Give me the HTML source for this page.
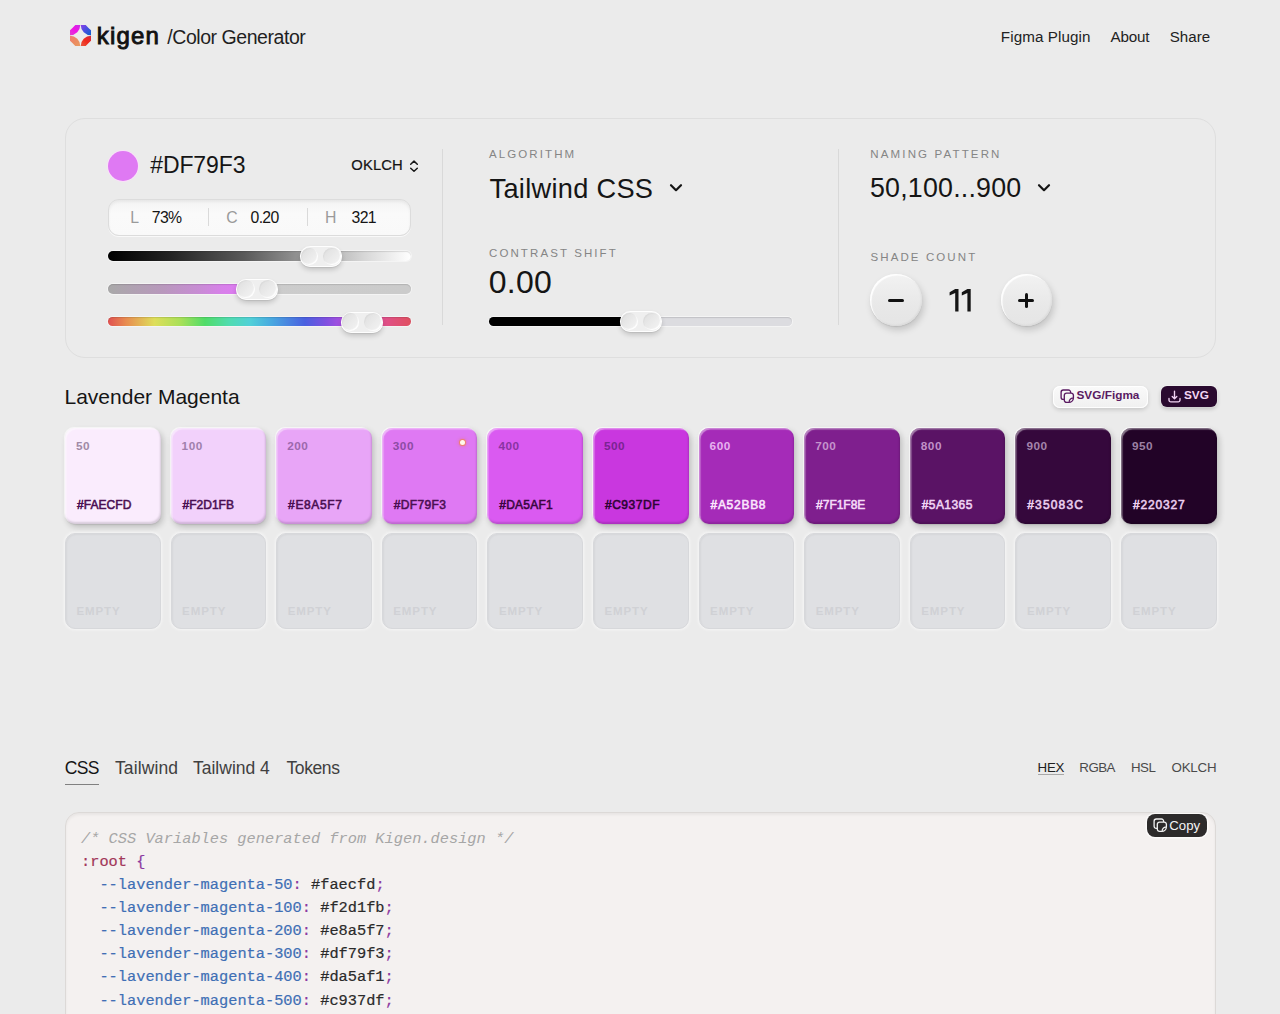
<!DOCTYPE html>
<html><head><meta charset="utf-8"><style>
*{margin:0;padding:0;box-sizing:border-box}
html,body{width:1280px;height:1014px;overflow:hidden;background:#ebebeb;font-family:"Liberation Sans",sans-serif}
.t{position:absolute;white-space:nowrap;line-height:1}
.abs{position:absolute}
.card{position:absolute;left:64.5px;top:117.5px;width:1151.5px;height:240px;border:1px solid #dedede;border-radius:20px;background:#ebebeb;}
.vdiv{position:absolute;width:1px;background:#d9d9d9}
.track{position:absolute;height:9.5px;border-radius:5px;box-shadow:inset 0 1px 1px rgba(0,0,0,.12), 0 0 0 1px rgba(255,255,255,.45)}
.thumb{position:absolute;width:42px;height:21px;border-radius:11px;background:#efefef;box-shadow:0 3px 5px rgba(0,0,0,.16),0 1px 1px rgba(0,0,0,.08),inset 0 0 0 1px rgba(255,255,255,.9)}
.thumb:before,.thumb:after{content:"";position:absolute;top:1.6px;width:17.8px;height:17.8px;border-radius:50%;background:linear-gradient(135deg,#dedede,#ececec 60%,#f4f4f4);box-shadow:inset -1px -1px 1px rgba(255,255,255,.95),inset 1px 1px 1px rgba(0,0,0,.03)}
.thumb:before{left:1.1px}.thumb:after{right:0.9px}
.sw{position:absolute;width:95.5px;height:95.5px;border-radius:10px}
.swf{box-shadow:inset 1.5px 1.5px 1px rgba(255,255,255,.45),inset -1px -2px 2px rgba(0,0,0,.14),-1px -1px 1px rgba(255,255,255,.7),2px 3px 6px rgba(0,0,0,.2),0 1px 1px rgba(0,0,0,.08)}
.swe{background:#dfe0e3;border:1px solid #d7d8db;box-shadow:inset 1px 1px 2px rgba(0,0,0,.04),0 0 3px 1px rgba(255,255,255,.55)}
.rbtn{position:absolute;width:51.5px;height:51.5px;border-radius:50%;background:linear-gradient(180deg,#f2f2f2,#e8e8e8 60%,#e5e5e5);box-shadow:2px 4px 7px rgba(0,0,0,.17),0 1px 1px rgba(0,0,0,.08),inset 1.5px 1.5px 1px rgba(255,255,255,.95),inset -1px -1px 2px rgba(0,0,0,.05)}
.code{position:absolute;left:65px;top:812px;width:1150.5px;height:260px;border-radius:14px;background:#f4f1f0;border:1px solid #dcd9d7;box-shadow:inset 0 2px 3px rgba(0,0,0,.05)}
.ln{position:absolute;left:81px;font-family:"Liberation Mono",monospace;font-size:15.33px;line-height:1;white-space:pre;color:#2a2a2a;-webkit-text-stroke-width:0.2px}
</style></head><body>
<svg class="abs" style="left:70.4px;top:25px" width="21" height="21" viewBox="0 0 21 21">
<defs>
<linearGradient id="g1" x1="0" y1="1" x2="1" y2="0"><stop offset="0" stop-color="#e040d0"/><stop offset=".5" stop-color="#f012e6"/><stop offset="1" stop-color="#c830e8"/></linearGradient>
<linearGradient id="g2" x1="0" y1="1" x2="1" y2="0"><stop offset="0" stop-color="#8a40e8"/><stop offset=".5" stop-color="#4450e0"/><stop offset="1" stop-color="#0c62c8"/></linearGradient>
<linearGradient id="g3" x1="0" y1="1" x2="1" y2="0"><stop offset="0" stop-color="#d02a40"/><stop offset=".5" stop-color="#f02a1c"/><stop offset="1" stop-color="#e85a40"/></linearGradient>
<linearGradient id="g4" x1="0" y1="1" x2="1" y2="0"><stop offset="0" stop-color="#e89a60"/><stop offset=".5" stop-color="#ec8a60"/><stop offset="1" stop-color="#f07a78"/></linearGradient>
</defs>
<path fill="url(#g1)" transform="rotate(0 10.5 10.5)" d="M10.25 0A10.25 10.25 0 0 1 0 10.25V5.3Q2.8 2.8 5.3 0Z"/>
<path fill="url(#g2)" transform="rotate(90 10.5 10.5)" d="M10.25 0A10.25 10.25 0 0 1 0 10.25V5.3Q2.8 2.8 5.3 0Z"/>
<path fill="url(#g3)" transform="rotate(180 10.5 10.5)" d="M10.25 0A10.25 10.25 0 0 1 0 10.25V5.3Q2.8 2.8 5.3 0Z"/>
<path fill="url(#g4)" transform="rotate(270 10.5 10.5)" d="M10.25 0A10.25 10.25 0 0 1 0 10.25V5.3Q2.8 2.8 5.3 0Z"/>
</svg>
<div class="t" style="left:96.80px;top:23.68px;font-size:24px;color:#111;font-weight:400;letter-spacing:1.2px;-webkit-text-stroke:0.9px #111;">kigen</div>
<div class="t" style="left:167.30px;top:27.79px;font-size:19.5px;color:#1f1f1f;font-weight:400;letter-spacing:-0.45px;">/Color Generator</div>
<div class="t" style="left:1000.80px;top:29.33px;font-size:15.2px;color:#222;font-weight:400;letter-spacing:0.1px;">Figma Plugin</div>
<div class="t" style="left:1110.50px;top:29.33px;font-size:15.2px;color:#222;font-weight:400;letter-spacing:-0.15px;">About</div>
<div class="t" style="left:1169.80px;top:28.92px;font-size:15.1px;color:#222;font-weight:400;letter-spacing:0px;">Share</div>
<div class="card"></div>
<div class="abs" style="left:107.5px;top:150.5px;width:30.5px;height:30.5px;border-radius:50%;background:#df79f3;box-shadow:0 0 0 1px rgba(255,220,255,.7)"></div>
<div class="t" style="left:150.20px;top:154.33px;font-size:23px;color:#151515;font-weight:400;letter-spacing:-0.1px;">#DF79F3</div>
<div class="t" style="left:351.30px;top:158.17px;font-size:14.8px;color:#151515;font-weight:400;letter-spacing:0.1px;-webkit-text-stroke:0.2px #151515;">OKLCH</div>
<svg class="abs" style="left:408.5px;top:159.5px" width="10" height="13" viewBox="0 0 10 13"><path d="M1.7 4.2L5 1.1L8.3 4.2M1.7 8.2L5 11.3L8.3 8.2" fill="none" stroke="#151515" stroke-width="1.45" stroke-linecap="round" stroke-linejoin="round"/></svg>
<div class="abs" style="left:107.75px;top:198.5px;width:303px;height:37px;border-radius:11px;background:linear-gradient(180deg,#f3f3f3,#fafafa 40%,#f9f9f9);border:1px solid #dcdcdc;box-shadow:inset 0 2px 3px rgba(0,0,0,.05),0 1px 0 rgba(255,255,255,.7)"></div>
<div class="t" style="left:130.20px;top:209.63px;font-size:15.8px;color:#9a9a9a;font-weight:400;letter-spacing:0px;">L</div>
<div class="t" style="left:151.80px;top:209.63px;font-size:15.8px;color:#151515;font-weight:400;letter-spacing:-0.7px;">73%</div>
<div class="t" style="left:226.20px;top:209.63px;font-size:15.8px;color:#9a9a9a;font-weight:400;letter-spacing:0px;">C</div>
<div class="t" style="left:250.60px;top:209.63px;font-size:15.8px;color:#151515;font-weight:400;letter-spacing:-0.7px;">0.20</div>
<div class="t" style="left:325.00px;top:209.63px;font-size:15.8px;color:#9a9a9a;font-weight:400;letter-spacing:0px;">H</div>
<div class="t" style="left:351.60px;top:209.63px;font-size:15.8px;color:#151515;font-weight:400;letter-spacing:-0.7px;">321</div>
<div class="vdiv" style="left:208px;top:208px;height:18px;background:#dadada"></div>
<div class="vdiv" style="left:307px;top:208px;height:18px;background:#dadada"></div>
<div class="track" style="left:107.5px;top:251.2px;width:303px;background:linear-gradient(90deg,#000 0%,#222 20%,#5a5a5a 45%,#9a9a9a 65%,#d8d8d8 85%,#fff 100%)"></div>
<div class="track" style="left:107.5px;top:284px;width:303px;background:linear-gradient(90deg,#a9a9a9 0%,#b898bc 18%,#c88cd4 30%,#d880ea 38%,#de7af2 45%,#cccccc 45.5%,#cbcbcb 100%)"></div>
<div class="track" style="left:107.5px;top:316.5px;width:303px;background:linear-gradient(90deg,#e05050 0%,#e88c50 6%,#dede5a 15.3%,#a8e058 24%,#50dc68 32%,#50dcb0 40%,#50d0d8 47%,#48a8e0 54%,#4a60e0 65%,#8050e0 72%,#a850e0 77%,#d850b0 85%,#e05088 91.6%,#e05060 100%)"></div>
<div class="thumb" style="left:299.5px;top:246px"></div>
<div class="thumb" style="left:235.8px;top:278.8px"></div>
<div class="thumb" style="left:340.6px;top:311.6px"></div>
<div class="vdiv" style="left:442px;top:149px;height:176px"></div>
<div class="t" style="left:489.00px;top:148.87px;font-size:11.5px;color:#858585;font-weight:400;letter-spacing:2.1px;">ALGORITHM</div>
<div class="t" style="left:489.50px;top:174.98px;font-size:27.2px;color:#151515;font-weight:400;letter-spacing:0.3px;">Tailwind CSS</div>
<svg class="abs" style="left:669px;top:183px" width="14" height="10" viewBox="0 0 14 10"><path d="M2 2.2L7 7.2L12 2.2" fill="none" stroke="#151515" stroke-width="2.2" stroke-linecap="round" stroke-linejoin="round"/></svg>
<div class="t" style="left:489.00px;top:247.57px;font-size:11.5px;color:#858585;font-weight:400;letter-spacing:2.1px;">CONTRAST SHIFT</div>
<div class="t" style="left:488.80px;top:266.01px;font-size:32px;color:#151515;font-weight:400;letter-spacing:0.2px;">0.00</div>
<div class="track" style="left:488.5px;top:316.5px;width:303.5px;background:linear-gradient(90deg,#000 0,#000 45%,#dcdce0 45%,#dcdce0 100%)"></div>
<div class="thumb" style="left:619.5px;top:311px"></div>
<div class="vdiv" style="left:838px;top:149px;height:176px"></div>
<div class="t" style="left:870.30px;top:149.47px;font-size:11.5px;color:#858585;font-weight:400;letter-spacing:2.15px;">NAMING PATTERN</div>
<div class="t" style="left:870.00px;top:174.81px;font-size:26.8px;color:#151515;font-weight:400;letter-spacing:0.2px;">50,100...900</div>
<svg class="abs" style="left:1037px;top:183px" width="14" height="10" viewBox="0 0 14 10"><path d="M2 2.2L7 7.2L12 2.2" fill="none" stroke="#151515" stroke-width="2.2" stroke-linecap="round" stroke-linejoin="round"/></svg>
<div class="t" style="left:870.50px;top:251.87px;font-size:11.5px;color:#858585;font-weight:400;letter-spacing:2.1px;">SHADE COUNT</div>
<div class="rbtn" style="left:870px;top:274.3px"></div>
<div class="abs" style="left:887.6px;top:298.8px;width:16.3px;height:3px;background:#111;border-radius:1.5px"></div>
<svg class="abs" style="left:949.4px;top:288.9px" width="24" height="23" viewBox="0 0 24 23"><path fill="#151515" d="M6.2 0H9.5V22.5H6.2V4.1L0.6 6.6V3.2Z M18.4 0H21.7V22.5H18.4V4.1L12.8 6.6V3.2Z"/></svg>
<div class="rbtn" style="left:1000.7px;top:274.3px"></div>
<div class="abs" style="left:1018.3px;top:298.8px;width:16px;height:3px;background:#111;border-radius:1.5px"></div>
<div class="abs" style="left:1024.8px;top:292.5px;width:3px;height:15.5px;background:#111;border-radius:1.5px"></div>
<div class="t" style="left:64.50px;top:385.62px;font-size:21px;color:#151515;font-weight:400;letter-spacing:0px;">Lavender Magenta</div>
<div class="abs" style="left:1052.5px;top:385.5px;width:95px;height:22px;border-radius:7px;background:linear-gradient(180deg,#fafafa,#f0f0f0);box-shadow:0 2px 4px rgba(0,0,0,.15),inset 0 0 0 1px rgba(255,255,255,.9)"></div>
<svg class="abs" style="left:1060px;top:389px" width="15" height="15" viewBox="0 0 15 15"><path d="M1.1 3.2A2.2 2.2 0 0 1 3.3 1H8.4A2.2 2.2 0 0 1 10.6 3.2V4.1M4.3 10.4H3.3A2.2 2.2 0 0 1 1.1 8.2V3.2" fill="none" stroke="#5a1a62" stroke-width="1.35"/><path d="M4.3 6.3A2.2 2.2 0 0 1 6.5 4.1H11.2A2.2 2.2 0 0 1 13.4 6.3V8.8A4.6 4.6 0 0 1 8.8 13.4H6.5A2.2 2.2 0 0 1 4.3 11.2Z" fill="none" stroke="#5a1a62" stroke-width="1.35"/><path d="M9.2 13.1A3.6 3.6 0 0 1 13.1 9.2" fill="none" stroke="#5a1a62" stroke-width="1.2"/></svg>
<div class="t" style="left:1076.50px;top:390.21px;font-size:11.8px;color:#5a1a62;font-weight:700;letter-spacing:0px;">SVG/Figma</div>
<div class="abs" style="left:1161px;top:386px;width:55.5px;height:21px;border-radius:6px;background:#2a0a2f;box-shadow:0 2px 4px rgba(0,0,0,.2),0 0 0 1px rgba(255,255,255,.5)"></div>
<svg class="abs" style="left:1167px;top:389px" width="15" height="15" viewBox="0 0 15 15"><path d="M7.5 2.1V9.6M5.2 7.5L7.5 9.8L9.8 7.5M2 9.5V11.1A1.8 1.8 0 0 0 3.8 12.9H11.2A1.8 1.8 0 0 0 13 11.1V9.5" fill="none" stroke="#f2d4f4" stroke-width="1.35" stroke-linecap="round" stroke-linejoin="round"/></svg>
<div class="t" style="left:1184.00px;top:390.21px;font-size:11.8px;color:#f4d8f4;font-weight:700;letter-spacing:0px;">SVG</div>
<div class="sw swf" style="left:65.00px;top:428px;background:#FAECFD"></div>
<div class="t" style="left:76.00px;top:441.31px;font-size:11.8px;color:#a08aa6;font-weight:700;letter-spacing:0.5px;">50</div>
<div class="t" style="left:76.90px;top:498.64px;font-size:12px;color:#4a0f52;font-weight:400;letter-spacing:0.08px;-webkit-text-stroke:0.55px #4a0f52;">#FAECFD</div>
<div class="sw swe" style="left:65.00px;top:533.3px"></div>
<div class="t" style="left:76.50px;top:605.57px;font-size:11.5px;color:#d0d1d5;font-weight:700;letter-spacing:0.9px;">EMPTY</div>
<div class="sw swf" style="left:170.60px;top:428px;background:#F2D1FB"></div>
<div class="t" style="left:181.60px;top:441.31px;font-size:11.8px;color:#a080ac;font-weight:700;letter-spacing:0.5px;">100</div>
<div class="t" style="left:182.50px;top:498.64px;font-size:12px;color:#4a0f52;font-weight:400;letter-spacing:0.02px;-webkit-text-stroke:0.55px #4a0f52;">#F2D1FB</div>
<div class="sw swe" style="left:170.60px;top:533.3px"></div>
<div class="t" style="left:182.10px;top:605.57px;font-size:11.5px;color:#d0d1d5;font-weight:700;letter-spacing:0.9px;">EMPTY</div>
<div class="sw swf" style="left:276.20px;top:428px;background:#E8A5F7"></div>
<div class="t" style="left:287.20px;top:441.31px;font-size:11.8px;color:#9c68ac;font-weight:700;letter-spacing:0.5px;">200</div>
<div class="t" style="left:288.10px;top:498.64px;font-size:12px;color:#4a0f52;font-weight:400;letter-spacing:0.62px;-webkit-text-stroke:0.55px #4a0f52;">#E8A5F7</div>
<div class="sw swe" style="left:276.20px;top:533.3px"></div>
<div class="t" style="left:287.70px;top:605.57px;font-size:11.5px;color:#d0d1d5;font-weight:700;letter-spacing:0.9px;">EMPTY</div>
<div class="sw swf" style="left:381.80px;top:428px;background:#DF79F3"></div>
<div class="t" style="left:392.80px;top:441.31px;font-size:11.8px;color:#8c4ca4;font-weight:700;letter-spacing:0.5px;">300</div>
<div class="t" style="left:393.70px;top:498.64px;font-size:12px;color:#4a0f52;font-weight:400;letter-spacing:0.35px;-webkit-text-stroke:0.55px #4a0f52;">#DF79F3</div>
<div class="sw swe" style="left:381.80px;top:533.3px"></div>
<div class="t" style="left:393.30px;top:605.57px;font-size:11.5px;color:#d0d1d5;font-weight:700;letter-spacing:0.9px;">EMPTY</div>
<div class="sw swf" style="left:487.40px;top:428px;background:#DA5AF1"></div>
<div class="t" style="left:498.40px;top:441.31px;font-size:11.8px;color:#8a34a2;font-weight:700;letter-spacing:0.5px;">400</div>
<div class="t" style="left:499.30px;top:498.64px;font-size:12px;color:#3a0640;font-weight:400;letter-spacing:0.23px;-webkit-text-stroke:0.55px #3a0640;">#DA5AF1</div>
<div class="sw swe" style="left:487.40px;top:533.3px"></div>
<div class="t" style="left:498.90px;top:605.57px;font-size:11.5px;color:#d0d1d5;font-weight:700;letter-spacing:0.9px;">EMPTY</div>
<div class="sw swf" style="left:593.00px;top:428px;background:#C937DF"></div>
<div class="t" style="left:604.00px;top:441.31px;font-size:11.8px;color:#7a2492;font-weight:700;letter-spacing:0.5px;">500</div>
<div class="t" style="left:604.90px;top:498.64px;font-size:12px;color:#2e0434;font-weight:400;letter-spacing:0.57px;-webkit-text-stroke:0.55px #2e0434;">#C937DF</div>
<div class="sw swe" style="left:593.00px;top:533.3px"></div>
<div class="t" style="left:604.50px;top:605.57px;font-size:11.5px;color:#d0d1d5;font-weight:700;letter-spacing:0.9px;">EMPTY</div>
<div class="sw swf" style="left:698.60px;top:428px;background:#A52BB8"></div>
<div class="t" style="left:709.60px;top:441.31px;font-size:11.8px;color:#e8b2f0;font-weight:700;letter-spacing:0.5px;">600</div>
<div class="t" style="left:710.50px;top:498.64px;font-size:12px;color:#fbe6fd;font-weight:400;letter-spacing:0.72px;-webkit-text-stroke:0.55px #fbe6fd;">#A52BB8</div>
<div class="sw swe" style="left:698.60px;top:533.3px"></div>
<div class="t" style="left:710.10px;top:605.57px;font-size:11.5px;color:#d0d1d5;font-weight:700;letter-spacing:0.9px;">EMPTY</div>
<div class="sw swf" style="left:804.20px;top:428px;background:#7F1F8E"></div>
<div class="t" style="left:815.20px;top:441.31px;font-size:11.8px;color:#c494cc;font-weight:700;letter-spacing:0.5px;">700</div>
<div class="t" style="left:816.10px;top:498.64px;font-size:12px;color:#f5dcf8;font-weight:400;letter-spacing:-0.03px;-webkit-text-stroke:0.55px #f5dcf8;">#7F1F8E</div>
<div class="sw swe" style="left:804.20px;top:533.3px"></div>
<div class="t" style="left:815.70px;top:605.57px;font-size:11.5px;color:#d0d1d5;font-weight:700;letter-spacing:0.9px;">EMPTY</div>
<div class="sw swf" style="left:909.80px;top:428px;background:#5A1365"></div>
<div class="t" style="left:920.80px;top:441.31px;font-size:11.8px;color:#c090c8;font-weight:700;letter-spacing:0.5px;">800</div>
<div class="t" style="left:921.70px;top:498.64px;font-size:12px;color:#f0d4f4;font-weight:400;letter-spacing:0.43px;-webkit-text-stroke:0.55px #f0d4f4;">#5A1365</div>
<div class="sw swe" style="left:909.80px;top:533.3px"></div>
<div class="t" style="left:921.30px;top:605.57px;font-size:11.5px;color:#d0d1d5;font-weight:700;letter-spacing:0.9px;">EMPTY</div>
<div class="sw swf" style="left:1015.40px;top:428px;background:#35083C"></div>
<div class="t" style="left:1026.40px;top:441.31px;font-size:11.8px;color:#a484ac;font-weight:700;letter-spacing:0.5px;">900</div>
<div class="t" style="left:1027.30px;top:498.64px;font-size:12px;color:#ecd0f0;font-weight:400;letter-spacing:1.15px;-webkit-text-stroke:0.55px #ecd0f0;">#35083C</div>
<div class="sw swe" style="left:1015.40px;top:533.3px"></div>
<div class="t" style="left:1026.90px;top:605.57px;font-size:11.5px;color:#d0d1d5;font-weight:700;letter-spacing:0.9px;">EMPTY</div>
<div class="sw swf" style="left:1121.00px;top:428px;background:#220327"></div>
<div class="t" style="left:1132.00px;top:441.31px;font-size:11.8px;color:#9c80a4;font-weight:700;letter-spacing:0.5px;">950</div>
<div class="t" style="left:1132.90px;top:498.64px;font-size:12px;color:#ecd0f0;font-weight:400;letter-spacing:0.85px;-webkit-text-stroke:0.55px #ecd0f0;">#220327</div>
<div class="sw swe" style="left:1121.00px;top:533.3px"></div>
<div class="t" style="left:1132.50px;top:605.57px;font-size:11.5px;color:#d0d1d5;font-weight:700;letter-spacing:0.9px;">EMPTY</div>
<div class="abs" style="left:459.6px;top:439.9px;width:5.4px;height:5.4px;border-radius:50%;background:#fff8ea;box-shadow:0 0 0 1px rgba(240,130,100,.85),0 0 3px 1.5px rgba(240,120,90,.45)"></div>
<div class="t" style="left:64.80px;top:760.39px;font-size:17.5px;color:#151515;font-weight:400;letter-spacing:-0.7px;">CSS</div>
<div class="abs" style="left:64.8px;top:784px;width:34.2px;height:1px;background:#808080"></div>
<div class="t" style="left:115.00px;top:760.39px;font-size:17.5px;color:#404040;font-weight:400;letter-spacing:0.1px;">Tailwind</div>
<div class="t" style="left:193.00px;top:760.39px;font-size:17.5px;color:#404040;font-weight:400;letter-spacing:0px;">Tailwind 4</div>
<div class="t" style="left:286.50px;top:760.39px;font-size:17.5px;color:#404040;font-weight:400;letter-spacing:-0.4px;">Tokens</div>
<div class="t" style="left:1037.50px;top:760.74px;font-size:13.3px;color:#202020;font-weight:400;letter-spacing:-0.2px;">HEX</div>
<div class="abs" style="left:1037.8px;top:774.2px;width:25.8px;height:1.3px;background:#a8a8a8"></div>
<div class="t" style="left:1079.30px;top:760.74px;font-size:13.3px;color:#4a4a4a;font-weight:400;letter-spacing:-0.5px;">RGBA</div>
<div class="t" style="left:1131.00px;top:760.74px;font-size:13.3px;color:#4a4a4a;font-weight:400;letter-spacing:-0.5px;">HSL</div>
<div class="t" style="left:1171.50px;top:760.74px;font-size:13.3px;color:#4a4a4a;font-weight:400;letter-spacing:-0.2px;">OKLCH</div>
<div class="code"></div>
<div class="abs" style="left:1146.5px;top:814px;width:60.5px;height:22.5px;border-radius:8px;background:#2d2b2b;box-shadow:0 0 0 1.5px rgba(255,255,255,.7)"></div>
<svg class="abs" style="left:1152.5px;top:817.5px" width="15" height="15" viewBox="0 0 15 15"><path d="M1.1 3.2A2.2 2.2 0 0 1 3.3 1H8.4A2.2 2.2 0 0 1 10.6 3.2V4.1M4.3 10.4H3.3A2.2 2.2 0 0 1 1.1 8.2V3.2" fill="none" stroke="#f2f2f2" stroke-width="1.3"/><path d="M4.3 6.3A2.2 2.2 0 0 1 6.5 4.1H11.2A2.2 2.2 0 0 1 13.4 6.3V8.8A4.6 4.6 0 0 1 8.8 13.4H6.5A2.2 2.2 0 0 1 4.3 11.2Z" fill="none" stroke="#f2f2f2" stroke-width="1.3"/><path d="M9.2 13.1A3.6 3.6 0 0 1 13.1 9.2" fill="none" stroke="#f2f2f2" stroke-width="1.2"/></svg>
<div class="t" style="left:1169.30px;top:818.63px;font-size:13.2px;color:#f4f4f4;font-weight:400;letter-spacing:0px;">Copy</div>
<div class="ln" style="top:832.15px"><span style="color:#a6a6a6;font-style:italic;-webkit-text-stroke-width:0">/* CSS Variables generated from Kigen.design */</span></div>
<div class="ln" style="top:855.20px"><span style="color:#a3385a">:root</span> <span style="color:#8c3aa0">{</span></div>
<div class="ln" style="top:878.25px">  <span style="color:#3f6fb5">--lavender-magenta-50</span><span style="color:#8c3aa0">:</span> #faecfd<span style="color:#8c3aa0">;</span></div>
<div class="ln" style="top:901.30px">  <span style="color:#3f6fb5">--lavender-magenta-100</span><span style="color:#8c3aa0">:</span> #f2d1fb<span style="color:#8c3aa0">;</span></div>
<div class="ln" style="top:924.35px">  <span style="color:#3f6fb5">--lavender-magenta-200</span><span style="color:#8c3aa0">:</span> #e8a5f7<span style="color:#8c3aa0">;</span></div>
<div class="ln" style="top:947.40px">  <span style="color:#3f6fb5">--lavender-magenta-300</span><span style="color:#8c3aa0">:</span> #df79f3<span style="color:#8c3aa0">;</span></div>
<div class="ln" style="top:970.45px">  <span style="color:#3f6fb5">--lavender-magenta-400</span><span style="color:#8c3aa0">:</span> #da5af1<span style="color:#8c3aa0">;</span></div>
<div class="ln" style="top:993.50px">  <span style="color:#3f6fb5">--lavender-magenta-500</span><span style="color:#8c3aa0">:</span> #c937df<span style="color:#8c3aa0">;</span></div>
<div class="ln" style="top:1016.55px">  <span style="color:#3f6fb5">--lavender-magenta-600</span><span style="color:#8c3aa0">:</span> #a52bb8<span style="color:#8c3aa0">;</span></div>
</body></html>
